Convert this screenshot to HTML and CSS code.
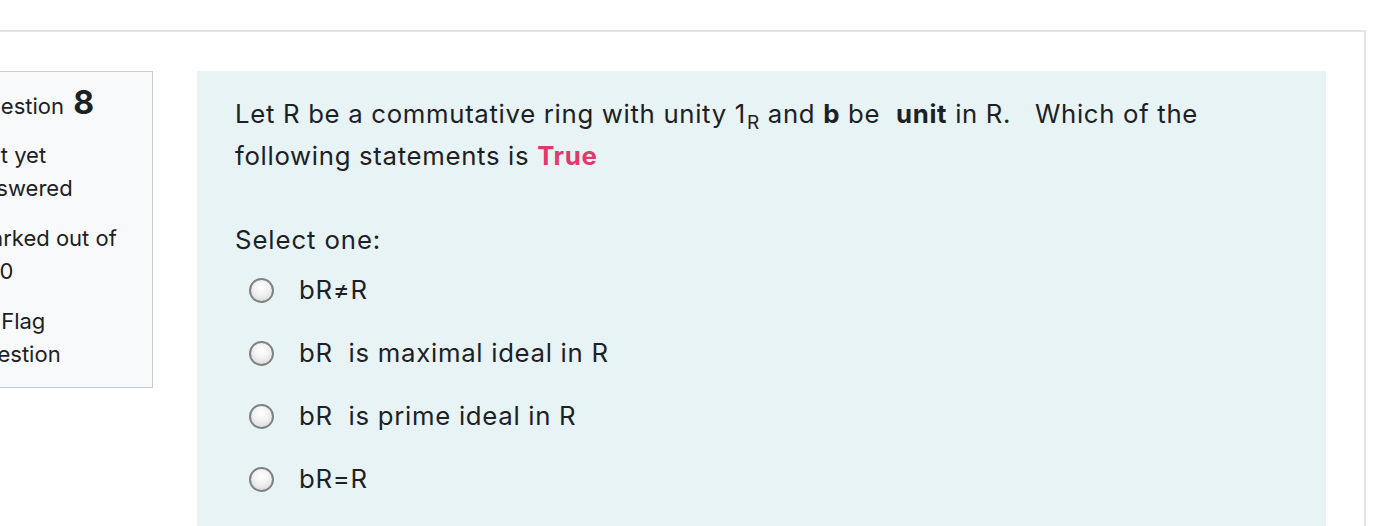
FILE: index.html
```html
<!DOCTYPE html>
<html>
<head>
<meta charset="utf-8">
<link rel="stylesheet" href="styles.css">
</head>
<body>
<div class="que">
  <div class="info">
    <h3 class="qno">Question <span class="num">8</span></h3>
    <div class="state">Not yet answered</div>
    <div class="grade">Marked out of 1.00</div>
    <div class="flag"><span class="flagicon"></span> Flag question</div>
  </div>
  <div class="content">
    <p class="qtext">Let R be a commutative ring with unity 1<sub>R</sub> and <b>b</b> be&nbsp; <b>unit</b> in R.&nbsp;&nbsp; Which of the following statements is <b class="true">True</b></p>
    <p class="prompt">Select one:</p>
    <div class="answers">
      <div class="opt"><span class="radio"></span><span>bR≠R</span></div>
      <div class="opt"><span class="radio"></span><span>bR&nbsp; is maximal ideal in R</span></div>
      <div class="opt"><span class="radio"></span><span>bR&nbsp; is prime ideal in R</span></div>
      <div class="opt"><span class="radio"></span><span>bR=R</span></div>
    </div>
  </div>
</div>
</body>
</html>
```
FILE: styles.css
```css
html, body {
  margin: 0;
  padding: 0;
  background: #ffffff;
  overflow: hidden;
}
body {
  font-family: Inter, "Liberation Sans", Arial, sans-serif;
  color: #1d2125;
}
.que {
  display: flex;
  align-items: flex-start;
  gap: 44px;
  margin-top: 30px;
  margin-left: -62px;
  width: 1428px;
  box-sizing: border-box;
  border: 2px solid #e2e4e6;
  border-bottom: none;
  padding: 39px 38px 0 20px;
  height: 500px;
  overflow: hidden;
}
.info {
  flex: 0 0 auto;
  width: 193px;
  box-sizing: border-box;
  background: #f8f9fa;
  border: 1px solid #c9cdd1;
  padding: 12px 24px 16px 10px;
  font-size: 22px;
  line-height: 33px;
  color: #1d2125;
}
.qno {
  margin: 0 0 17px 0;
  font-weight: normal;
  font-size: 22px;
  line-height: 38px;
  height: 38px;
  white-space: nowrap;
}
.qno .num {
  font-weight: bold;
  font-size: 32px;
  margin-left: 3px;
}
.state, .grade {
  margin-bottom: 17px;
}
.flagicon {
  display: inline-block;
  width: 24px;
  height: 16px;
  border: 1px solid #999;
  box-sizing: border-box;
}
.content {
  flex: 1 1 auto;
  background: #e7f3f5;
  padding: 22px 38px 40px 38px;
  height: 600px;
  font-size: 25.75px;
  line-height: 42px;
}
.qtext {
  margin: 0 0 42px 0;
  max-width: 1010px;
  letter-spacing: 0.68px;
}
.qtext sub {
  font-size: 19px;
  vertical-align: -6px;
  line-height: 0;
  margin-left: 1px;
}
.true {
  color: #e0396b;
}
.prompt {
  margin: 0 0 8px 0;
  letter-spacing: 0.9px;
}
.answers {
  display: flex;
  flex-direction: column;
  gap: 21px;
}
.opt {
  display: flex;
  align-items: center;
  gap: 25px;
  padding-left: 14px;
  letter-spacing: 0.7px;
}
.radio {
  display: inline-block;
  width: 21px;
  height: 21px;
  border-radius: 50%;
  border: 2px solid #808285;
  background: radial-gradient(circle at 50% 35%, #ffffff 0%, #f1f1f1 45%, #d4d4d4 100%);
  flex: 0 0 auto;
}
```
